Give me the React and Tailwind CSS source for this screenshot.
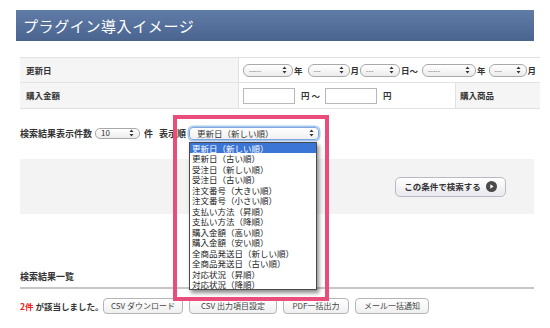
import React from 'react';

const SORT_OPTIONS = [
    '更新日（新しい順）',
    '更新日（古い順）',
    '受注日（新しい順）',
    '受注日（古い順）',
    '注文番号（大きい順）',
    '注文番号（小さい順）',
    '支払い方法（昇順）',
    '支払い方法（降順）',
    '購入金額（高い順）',
    '購入金額（安い順）',
    '全商品発送日（新しい順）',
    '全商品発送日（古い順）',
    '対応状況（昇順）',
    '対応状況（降順）',
];

const UpDown = () => (
    <svg width="5" height="8" viewBox="0 0 5 8" className="shrink-0">
        <path d="M2.5 0.5 L4.5 3 L0.5 3 Z" fill="#333" />
        <path d="M2.5 7.5 L4.5 5 L0.5 5 Z" fill="#333" />
    </svg>
);

const MiniSelect = ({ width, label }) => (
    <div
        className="flex items-center justify-between h-[13px] px-[5px] rounded-[6px] border border-[#a9a9a9] bg-gradient-to-b from-white to-[#ececec] shrink-0"
        style={{ width }}
    >
        <span className="text-[7px] leading-none text-[#666]">{label}</span>
        <UpDown />
    </div>
);

const Unit = ({ children }) => (
    <span className="text-[8.5px] font-bold text-[#333] leading-none shrink-0">{children}</span>
);

const ActionButton = ({ width, children }) => (
    <button
        className="h-[16px] rounded-[4px] border border-[#b5b5b5] bg-gradient-to-b from-white to-[#efefef] text-[8px] text-[#444] leading-none flex items-center justify-center shrink-0"
        style={{ width }}
    >
        {children}
    </button>
);

export default function App() {
    return (
        <div className="relative w-[550px] h-[328px] overflow-hidden bg-white font-['Noto_Sans_CJK_JP',sans-serif] text-[#333]">
            {/* Title bar */}
            <div className="mt-[10px] ml-[16px] w-[518px] h-[31px] bg-gradient-to-b from-[#5f7ca6] to-[#4a6490] flex items-center pl-[7px]">
                <h1 className="text-[15px] text-white leading-none tracking-[0.6px]">
                    プラグイン導入イメージ
                </h1>
            </div>

            {/* Search table */}
            <div className="mt-[16px] ml-[20px] w-[520px] border-t border-b border-[#e2e2e2]">
                <div className="grid grid-cols-[219px_1fr] h-[25px] border-b border-[#e2e2e2]">
                    <div className="bg-[#f5f5f5] flex items-center pl-[6px] text-[8.5px] font-bold border-r border-[#e2e2e2]">
                        更新日
                    </div>
                    <div className="flex items-center pl-[4px] gap-[1px] whitespace-nowrap">
                        <MiniSelect width={50} label="-----" />
                        <Unit>年</Unit>
                        <div className="w-[3px]" />
                        <MiniSelect width={42} label="---" />
                        <Unit>月</Unit>
                        <MiniSelect width={40} label="---" />
                        <Unit>日〜</Unit>
                        <div className="w-[2px]" />
                        <MiniSelect width={54} label="-----" />
                        <Unit>年</Unit>
                        <div className="w-[1px]" />
                        <MiniSelect width={38} label="---" />
                        <Unit>月</Unit>
                    </div>
                </div>
                <div className="grid grid-cols-[219px_217px_1fr] h-[25px]">
                    <div className="bg-[#f5f5f5] flex items-center pl-[6px] text-[8.5px] font-bold border-r border-[#e2e2e2]">
                        購入金額
                    </div>
                    <div className="flex items-center pl-[4px] border-r border-[#e2e2e2]">
                        <div className="w-[52px] h-[16px] border border-[#b8b8b8] bg-white" />
                        <span className="ml-[6px] text-[8.5px] font-bold leading-none">円 〜</span>
                        <div className="ml-[5px] w-[52px] h-[16px] border border-[#b8b8b8] bg-white" />
                        <span className="ml-[6px] text-[8.5px] font-bold leading-none">円</span>
                    </div>
                    <div className="bg-[#f5f5f5] flex items-center pl-[4px] text-[8.5px] font-bold">
                        購入商品
                    </div>
                </div>
            </div>

            {/* Display settings */}
            <div className="mt-[17px] ml-[20px] h-[14px] flex items-center text-[9px] font-bold leading-none whitespace-nowrap">
                <span>検索結果表示件数</span>
                <div className="ml-[3px] w-[45px] h-[11px] flex items-center justify-between px-[5px] rounded-[5px] border border-[#a9a9a9] bg-gradient-to-b from-white to-[#ececec]">
                    <span className="text-[8px] font-normal">10</span>
                    <UpDown />
                </div>
                <span className="ml-[4px]">件</span>
                <span className="ml-[6px]">表示順</span>
                <div className="relative ml-[3px]">
                    <div className="w-[130px] h-[13px] flex items-center justify-between pl-[7px] pr-[4px] rounded-[4px] border border-[#7fa9dd] shadow-[0_0_0_1.5px_#a9c8ef] bg-gradient-to-b from-white to-[#f0f0f0]">
                        <span className="text-[8.5px] font-normal">更新日（新しい順）</span>
                        <UpDown />
                    </div>
                    {/* Open option list */}
                    <ul className="absolute left-0 top-[15px] w-[128px] h-[148px] bg-white border border-[#4a4a4a] shadow-[2px_3px_4px_rgba(0,0,0,0.45)] z-10 py-0">
                        {SORT_OPTIONS.map((option, i) => (
                            <li
                                key={option}
                                className={
                                    i === 0
                                        ? 'h-[10.5px] pl-[2px] text-[8.5px] leading-[10.5px] font-normal bg-[#3b76d6] text-white'
                                        : 'h-[10.5px] pl-[2px] text-[8.5px] leading-[10.5px] font-normal text-[#222]'
                                }
                            >
                                {option}
                            </li>
                        ))}
                    </ul>
                </div>
            </div>

            {/* Search panel */}
            <div className="mt-[19px] ml-[20px] w-[514px] h-[55px] bg-[#f3f3f3] flex items-center justify-end pr-[28px]">
                <button className="w-[111px] h-[20px] rounded-[5px] border border-[#b9b9c4] bg-gradient-to-b from-white to-[#e9e9ee] flex items-center justify-center gap-[5px]">
                    <span className="text-[8.5px] font-bold text-[#333] leading-none">この条件で検索する</span>
                    <svg width="11" height="11" viewBox="0 0 11 11">
                        <circle cx="5.5" cy="5.5" r="5.5" fill="#4a4a4a" />
                        <path d="M4.3 3.2 L7.6 5.5 L4.3 7.8 Z" fill="#fff" />
                    </svg>
                </button>
            </div>

            {/* Results */}
            <div className="mt-[57px] ml-[20px] w-[514px] h-[18px] border-b-2 border-[#c6c6c6] text-[9px] font-bold leading-[12px]">
                検索結果一覧
            </div>
            <div className="mt-[9px] ml-[20px] h-[16px] flex items-center gap-[6px] whitespace-nowrap">
                <span className="w-[77px] text-[8.5px] leading-none font-bold">
                    <span className="text-[#e8201a]">2件</span> が該当しました。
                </span>
                <ActionButton width={80}>CSV ダウンロード</ActionButton>
                <ActionButton width={88}>CSV 出力項目設定</ActionButton>
                <ActionButton width={66}>PDF一括出力</ActionButton>
                <ActionButton width={74}>メール一括通知</ActionButton>
            </div>

            {/* Highlight frame */}
            <div className="absolute left-[173px] top-[115px] w-[156px] h-[186px] border-[4px] border-[#ea4c7c] z-20 pointer-events-none" />
        </div>
    );
}
